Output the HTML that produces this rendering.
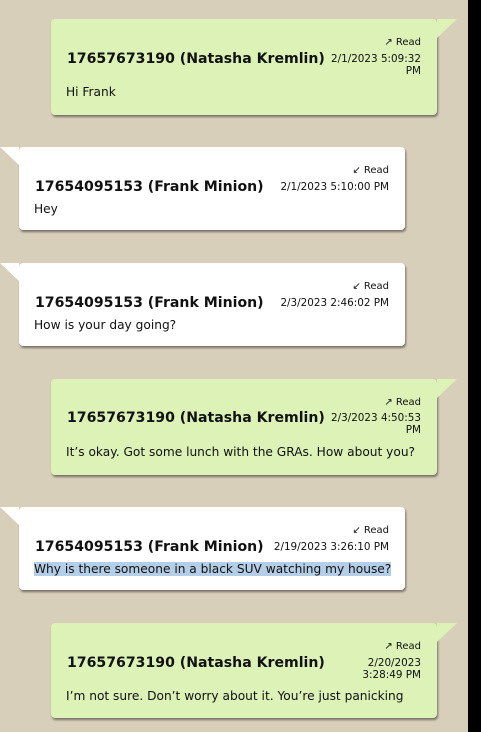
<!DOCTYPE html>
<html><head><meta charset="utf-8"><style>
*{margin:0;padding:0;box-sizing:border-box}
html,body{width:481px;height:732px;overflow:hidden;background:#d8cfbb;font-family:"DejaVu Sans","Liberation Sans",sans-serif;color:#111}
.strip{position:absolute;left:468px;top:0;width:13px;height:732px;background:#000}
.b{position:absolute;border-radius:4px;box-shadow:1px 2px 2px rgba(0,0,0,.45)}
.g{left:51px;width:386px;background:#dcf2b6}
.w{left:19px;width:386px;background:#fff}
.g:before{content:"";position:absolute;right:-20px;top:0;border-top:19px solid #dcf2b6;border-right:20px solid transparent}
.w:before{content:"";position:absolute;left:-19px;top:0;border-top:18px solid #fff;border-left:19px solid transparent}
.rd{position:absolute;right:16px;font-size:10px;line-height:12px;white-space:nowrap}
.nm{position:absolute;left:16px;font-size:14.1px;font-weight:bold;line-height:16px;white-space:nowrap}
.dt{position:absolute;right:16px;font-size:10.4px;line-height:12px;text-align:right;white-space:nowrap}
.tx{position:absolute;left:15px;font-size:12.2px;line-height:16px;white-space:nowrap}
.sel{background:#b3cee6}
</style></head><body>
<div class="strip"></div>

<div class="b g" style="top:19px;height:96px">
 <div class="rd" style="top:18px">↗ Read</div>
 <div class="nm" style="top:32px">17657673190 (Natasha Kremlin)</div>
 <div class="dt" style="top:34px">2/1/2023 5:09:32<br>PM</div>
 <div class="tx" style="top:65px">Hi Frank</div>
</div>

<div class="b w" style="top:147px;height:83px">
 <div class="rd" style="top:18px">↙ Read</div>
 <div class="nm" style="top:32px">17654095153 (Frank Minion)</div>
 <div class="dt" style="top:34px">2/1/2023 5:10:00 PM</div>
 <div class="tx" style="top:54px">Hey</div>
</div>

<div class="b w" style="top:263px;height:83px">
 <div class="rd" style="top:18px">↙ Read</div>
 <div class="nm" style="top:32px">17654095153 (Frank Minion)</div>
 <div class="dt" style="top:34px">2/3/2023 2:46:02 PM</div>
 <div class="tx" style="top:54px">How is your day going?</div>
</div>

<div class="b g" style="top:379px;height:96px">
 <div class="rd" style="top:18px">↗ Read</div>
 <div class="nm" style="top:31px">17657673190 (Natasha Kremlin)</div>
 <div class="dt" style="top:33px">2/3/2023 4:50:53<br>PM</div>
 <div class="tx" style="top:65px">It’s okay. Got some lunch with the GRAs. How about you?</div>
</div>

<div class="b w" style="top:507px;height:83px">
 <div class="rd" style="top:18px">↙ Read</div>
 <div class="nm" style="top:32px">17654095153 (Frank Minion)</div>
 <div class="dt" style="top:34px">2/19/2023 3:26:10 PM</div>
 <div class="tx" style="top:54px"><span class="sel">Why is there someone in a black SUV watching my house?</span></div>
</div>

<div class="b g" style="top:623px;height:95px">
 <div class="rd" style="top:18px">↗ Read</div>
 <div class="nm" style="top:32px">17657673190 (Natasha Kremlin)</div>
 <div class="dt" style="top:34px">2/20/2023<br>3:28:49 PM</div>
 <div class="tx" style="top:65px">I’m not sure. Don’t worry about it. You’re just panicking</div>
</div>
</body></html>
